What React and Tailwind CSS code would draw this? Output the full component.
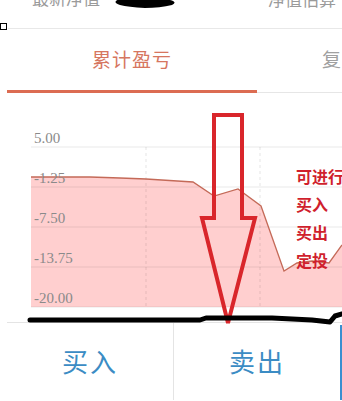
import React from "react";

const cjk = { fontFamily: '"Noto Sans CJK SC", "Noto Sans", sans-serif' };

// data line of the accumulated P/L chart (svg coords, origin at chart top-left)
const points = [
  [31, 84], [60, 84], [90, 84], [120, 85], [146, 86], [193, 89], [214, 103],
  [238, 96], [261, 113], [284, 178], [297, 170], [312, 168], [329, 170], [342, 152],
];

const linePath = points.map((p, i) => `${i === 0 ? "M" : "L"}${p[0]} ${p[1]}`).join(" ");
const areaPath = `${linePath} L342 214 L31 214 Z`;

const grid = [54, 94, 134, 174, 214];
const labels = ["5.00", "-1.25", "-7.50", "-13.75", "-20.00"];

const Chart = () => (
  <svg width="342" height="229" className="block">
    <path d={areaPath} fill="#ffcfcf" />
    {grid.map((y) => (
      <line key={y} x1="31" x2="342" y1={y} y2={y} stroke="rgba(0,0,0,0.09)" strokeWidth="1" />
    ))}
    {[146, 260].map((x) => (
      <line key={x} x1={x} x2={x} y1="54" y2="214" stroke="rgba(0,0,0,0.1)" strokeDasharray="3 3" />
    ))}
    <path d={linePath} fill="none" stroke="#c46a58" strokeWidth="1.3" />
    {labels.map((t, i) => (
      <text
        key={t}
        x="34"
        y={grid[i] - 4}
        fontSize="15"
        fill="#8a8a8a"
        fontFamily='"Liberation Serif", serif'
      >
        {t}
      </text>
    ))}
  </svg>
);

const App = () => {
  return (
    <div className="relative w-[342px] h-[401px] overflow-hidden bg-white" style={cjk}>
      {/* top info row, cut off at the top */}
      <div className="h-[29px] flex items-start text-[17px] leading-[17px] text-[#9a9a9a] border-b border-[#e8e8e8] ml-[8px]">
        <span className="ml-[24px] -mt-[11px]">最新净值</span>
        <span className="ml-auto mr-[6px] -mt-[10px] whitespace-nowrap">净值估算</span>
      </div>

      {/* tabs */}
      <div className="ml-[7px]">
        <div className="flex h-[61px] items-center text-[19px]">
          <div className="w-[250px] text-center text-[#d6765f] tracking-[1px]">累计盈亏</div>
          <div className="flex-1 pl-[65px] text-[#a0a0a0] whitespace-nowrap">复</div>
        </div>
        <div className="flex items-end h-[3px]">
          <div className="w-[250px] h-[3px] bg-[#dc6c52]" />
          <div className="flex-1 h-px bg-[#e6e6e6]" />
        </div>
      </div>

      {/* chart */}
      <Chart />

      {/* buy / sell buttons */}
      <div className="ml-[7px] flex h-[78px] border-t border-[#e4e4e4] text-[26px] text-[#3b8cc4] tracking-[2px]">
        <button className="w-[167px] border-r border-[#e4e4e4] pb-[3px]">买入</button>
        <button className="w-[166px] pb-[3px]">卖出</button>
        <div className="w-[2px] mt-[2px] bg-[#3a8fd0]" />
      </div>

      {/* annotations drawn over the screenshot */}
      <div className="absolute left-0 top-[23px] w-[7px] h-[7px] border border-black bg-white" />

      <svg className="absolute inset-0 pointer-events-none" width="342" height="401">
        <path d="M116 1 Q118 -2 135 0 L170 0 Q178 2 172 5 Q160 8 145 8 Q128 7 120 5 Q114 3 116 1 Z" fill="#000" />
        <polygon
          points="214,115 242,115 242,218 255,218 228,323 202,218 214,218"
          fill="none"
          stroke="#d9262b"
          strokeWidth="4"
        />
        <path
          d="M30 320 L200 320 L206 318 L272 318 L312 320 L330 322 L335 316 L342 314"
          fill="none"
          stroke="#000"
          strokeWidth="5"
          strokeLinecap="round"
          strokeLinejoin="round"
        />
      </svg>

      <div className="absolute left-[296px] top-[162px] text-[16px] leading-[28px] font-bold text-[#d01f2d] whitespace-nowrap">
        <div>可进行</div>
        <div>买入</div>
        <div>买出</div>
        <div>定投</div>
      </div>
    </div>
  );
};

export default App;
